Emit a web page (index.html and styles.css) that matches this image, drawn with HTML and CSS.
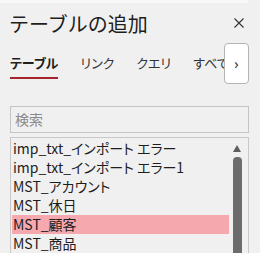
FILE: index.html
```html
<!DOCTYPE html>
<html>
<head>
    <meta charset="utf-8">
    <title>テーブルの追加</title>
    <link rel="stylesheet" href="styles.css">
</head>
<body>
    <div class="topstrip"></div>
    <div class="pane">
        <div class="pane-head">
            <div class="pane-title">テーブルの追加</div>
            <svg class="close" width="10" height="10" viewBox="0 0 10 10">
                <path d="M0.5 0.5 L9.5 9.5 M9.5 0.5 L0.5 9.5" stroke="#333" stroke-width="1.1" fill="none"/>
            </svg>
        </div>

        <div class="tabbar">
            <div class="tabs">
                <div class="tab active">テーブル</div>
                <div class="tab">リンク</div>
                <div class="tab">クエリ</div>
                <div class="tab">すべて</div>
            </div>
            <button class="tab-next">›</button>
        </div>

        <div class="search">検索</div>

        <div class="list">
            <ul class="items">
                <li>imp_txt_インポート エラー</li>
                <li>imp_txt_インポート エラー1</li>
                <li>MST_アカウント</li>
                <li>MST_休日</li>
                <li class="selected">MST_顧客</li>
                <li>MST_商品</li>
            </ul>
            <div class="scrollbar">
                <div class="arrow-up"></div>
                <div class="thumb"></div>
            </div>
        </div>
    </div>
</body>
</html>
```

FILE: styles.css
```css
* {
    box-sizing: border-box;
}
body {
    margin: 0;
    background: #f0f0f0;
    font-family: "Noto Sans CJK JP", "Noto Sans", sans-serif;
    color: #222;
    overflow: hidden;
    height: 253px;
}
.topstrip {
    height: 3px;
    width: 248px;
    background: #f8f8f8;
}
.pane {
    padding-left: 10px;
    padding-right: 11px;
}

/* header */
.pane-head {
    display: flex;
    align-items: center;
    justify-content: space-between;
    height: 40px;
    padding-top: 1px;
}
.pane-title {
    font-size: 20px;
    line-height: 20px;
    margin-left: -1px;
    color: #1e1e1e;
}
.close {
    margin-right: 5px;
    margin-top: -2px;
}

/* tabs */
.tabbar {
    display: flex;
    height: 41px;
}
.tabs {
    flex: 1;
    display: flex;
    gap: 22px;
    overflow: hidden;
    white-space: nowrap;
}
.tab {
    font-size: 13px;
    line-height: 13px;
    padding-top: 13px;
    height: 36px;
    color: #333;
    font-feature-settings: "palt";
    flex-shrink: 0;
}
.tab.active {
    font-weight: bold;
    color: #1e1e1e;
    border-bottom: 2px solid #a4262c;
}
.tab-next {
    width: 25px;
    height: 41px;
    background: #fff;
    border: 1px solid #b4b4b4;
    border-radius: 4px;
    padding: 0;
    font-size: 14px;
    color: #333;
    font-family: "Noto Sans", sans-serif;
}

/* search */
.search {
    margin-top: 22px;
    height: 27px;
    border: 1px solid #c4c4c4;
    padding-left: 4px;
    font-size: 14px;
    line-height: 24px;
    color: #8a8a8a;
}

/* list */
.list {
    margin-top: 4px;
    height: 130px;
    border: 1px solid #c8c8c8;
    border-bottom: none;
    display: flex;
}
.items {
    flex: 1;
    list-style: none;
    margin: 0;
    padding: 1px 0 0 1px;
}
.items li {
    height: 19px;
    line-height: 19px;
    font-size: 14px;
    padding-left: 1px;
    color: #1e1e1e;
    white-space: nowrap;
    font-feature-settings: "palt";
}
.items li.selected {
    background: #f5a9af;
}
.scrollbar {
    width: 19px;
    display: flex;
    flex-direction: column;
    align-items: center;
    padding-top: 7px;
    padding-right: 3px;
}
.arrow-up {
    width: 0;
    height: 0;
    border-left: 4.5px solid transparent;
    border-right: 4.5px solid transparent;
    border-bottom: 7px solid #5e5e5e;
}
.thumb {
    margin-top: 5px;
    width: 9px;
    flex: 1;
    background: #6c6c6c;
    border-radius: 4px 4px 0 0;
}
```
